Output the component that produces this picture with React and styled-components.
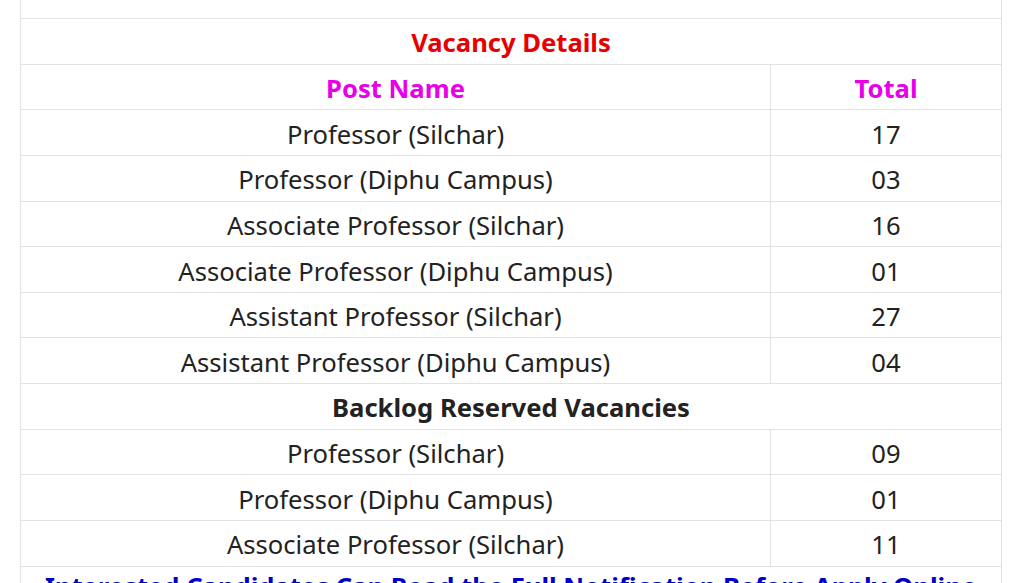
import React from 'react';
import styled, { createGlobalStyle } from 'styled-components';

const GlobalStyle = createGlobalStyle`
  html, body {
    margin: 0;
    padding: 0;
    background: #ffffff;
  }
  body {
    font-family: "Noto Sans", "Open Sans", Arial, sans-serif;
    color: #222222;
  }
`;

const posts = [
  { name: 'Professor (Silchar)', total: '17' },
  { name: 'Professor (Diphu Campus)', total: '03' },
  { name: 'Associate Professor (Silchar)', total: '16' },
  { name: 'Associate Professor (Diphu Campus)', total: '01' },
  { name: 'Assistant Professor (Silchar)', total: '27' },
  { name: 'Assistant Professor (Diphu Campus)', total: '04' }
];

const backlog = [
  { name: 'Professor (Silchar)', total: '09' },
  { name: 'Professor (Diphu Campus)', total: '01' },
  { name: 'Associate Professor (Silchar)', total: '11' }
];

const App = () => {
  return (
    <Page>
      <GlobalStyle />
      <Table>
        <colgroup>
          <col style={{ width: '750px' }} />
          <col />
        </colgroup>
        <tbody>
          <TopRow>
            <td colSpan={2}></td>
          </TopRow>
          <Row>
            <Cell colSpan={2}>
              <Title>Vacancy Details</Title>
            </Cell>
          </Row>
          <Row>
            <Cell>
              <Head>Post Name</Head>
            </Cell>
            <Cell>
              <Head>Total</Head>
            </Cell>
          </Row>
          {posts.map((p, i) => (
            <Row key={'p' + i}>
              <Cell>{p.name}</Cell>
              <Cell>{p.total}</Cell>
            </Row>
          ))}
          <Row>
            <Cell colSpan={2}>
              <Section>Backlog Reserved Vacancies</Section>
            </Cell>
          </Row>
          {backlog.map((p, i) => (
            <Row key={'b' + i}>
              <Cell>{p.name}</Cell>
              <Cell>{p.total}</Cell>
            </Row>
          ))}
          <Row>
            <Cell colSpan={2} $notice>
              <Notice>Interested Candidates Can Read the Full Notification Before Apply Online</Notice>
            </Cell>
          </Row>
        </tbody>
      </Table>
    </Page>
  );
};

const Page = styled.div`
  padding: 0 15px 0 20px;
  height: 583px;
  overflow: hidden;
`;

const Table = styled.table`
  width: 982px;
  border-collapse: collapse;
  table-layout: fixed;
`;

const TopRow = styled.tr`
  height: 18.5px;

  > td {
    border: 1px solid #e2e2e2;
    border-top: none;
    padding: 0;
  }
`;

const Row = styled.tr`
  height: 45.65px;
`;

const Cell = styled.td`
  border: 1px solid #e2e2e2;
  padding: ${(p) => (p.$notice ? '4px' : '4px')} 6px 0;
  text-align: center;
  vertical-align: ${(p) => (p.$notice ? 'top' : 'middle')};
  font-size: 25.6px;
  line-height: 32px;
  color: #222222;
`;

const Title = styled.span`
  font-weight: 700;
  color: #e60000;
`;

const Head = styled.span`
  font-weight: 700;
  color: #e800e8;
`;

const Section = styled.span`
  font-weight: 700;
  color: #222222;
`;

const Notice = styled.span`
  font-weight: 700;
  color: #0000c8;
  white-space: nowrap;
`;

export default App;
